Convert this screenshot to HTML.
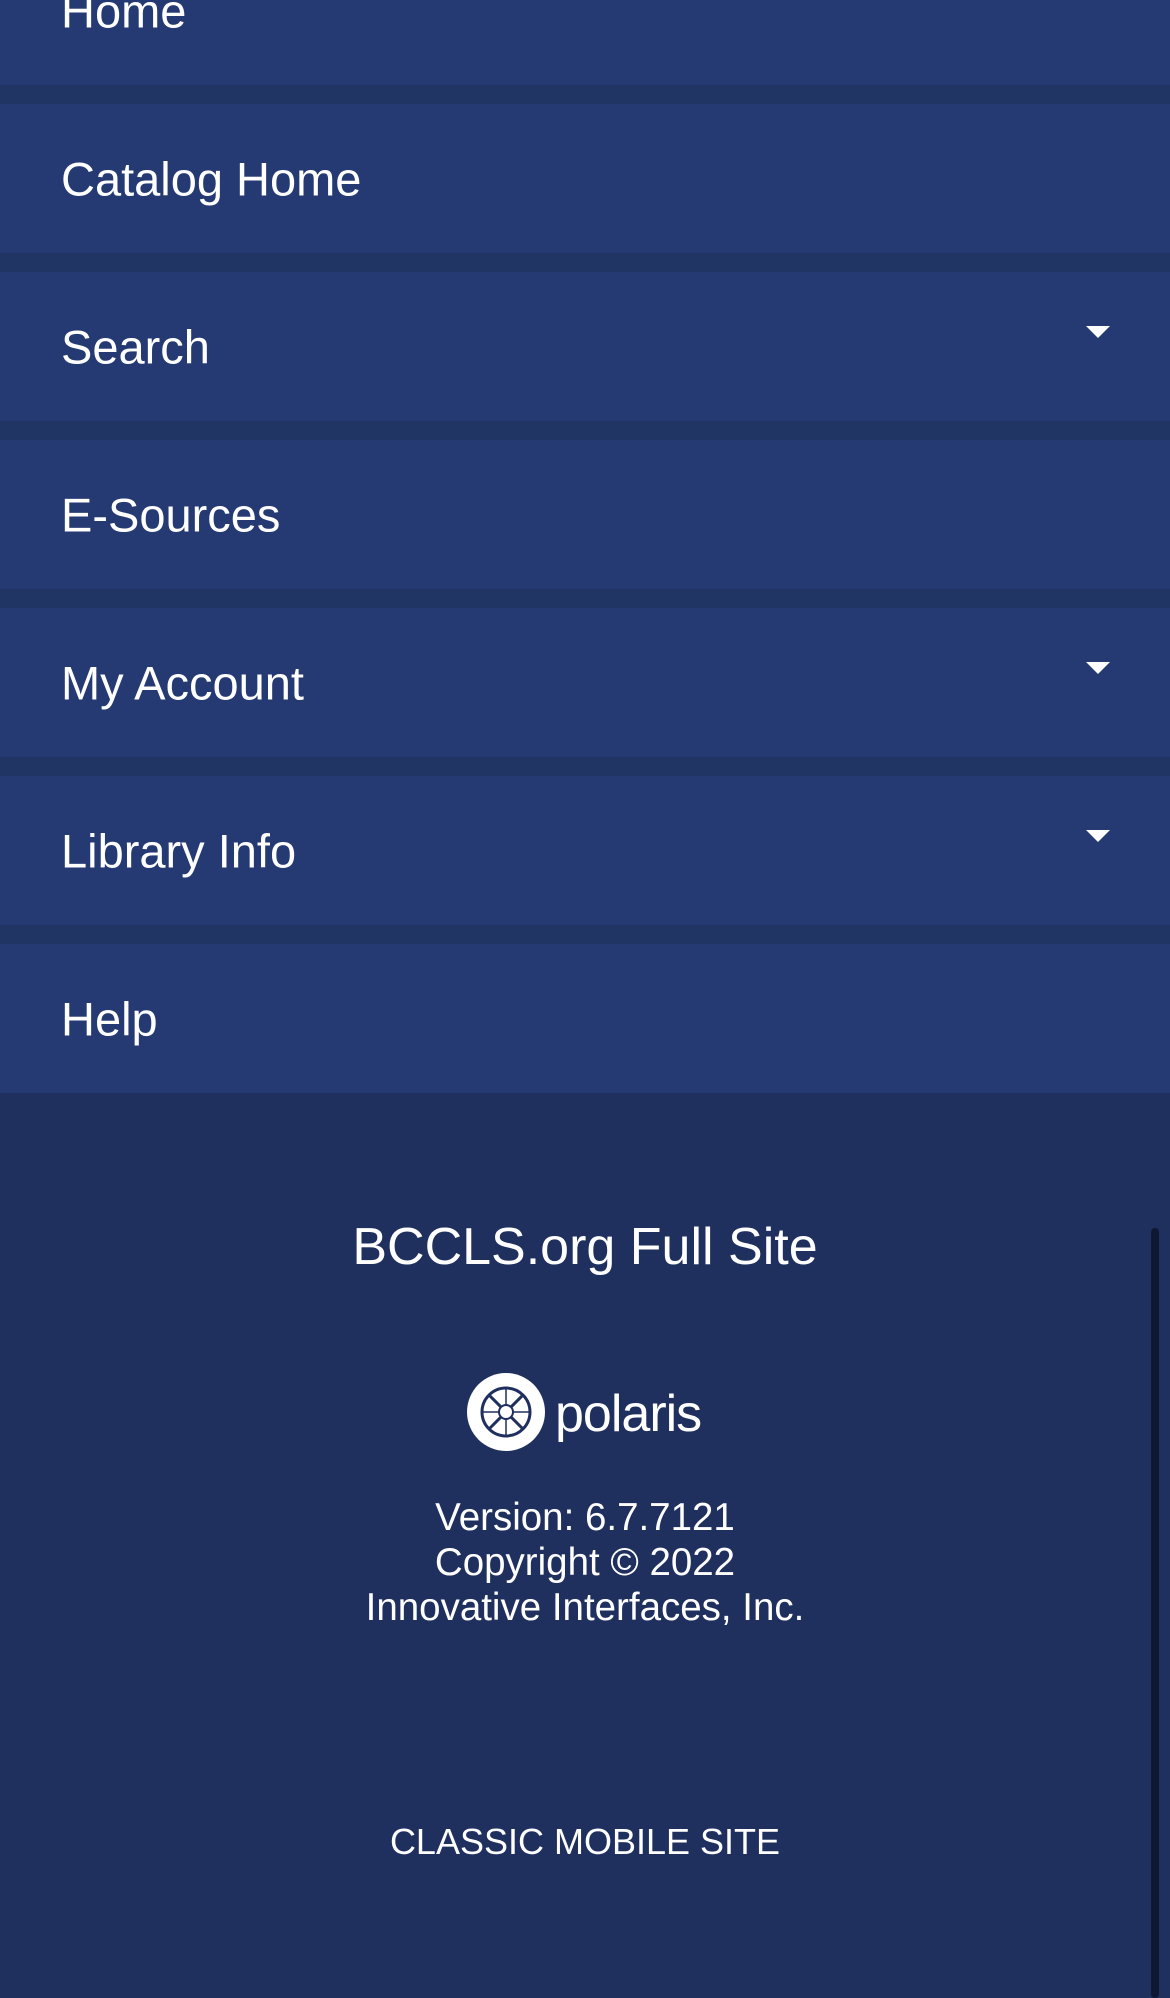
<!DOCTYPE html>
<html><head><meta charset="utf-8"><style>
html,body{margin:0;padding:0;}
body{width:1170px;height:1985px;background:#1f2f5e;position:relative;overflow:hidden;font-family:"Liberation Sans",sans-serif;color:#fff;}
.gap{position:absolute;left:0;width:1170px;background:#213564;}
.item{position:absolute;left:0;width:1170px;height:149px;background:#253a73;}
.item span{position:absolute;left:61px;top:50%;transform:translateY(-50%);font-size:47px;line-height:1;}
.tri{position:absolute;left:1086px;width:0;height:0;border-left:12px solid transparent;border-right:12px solid transparent;border-top:12px solid #fff;}
.c{position:absolute;left:0;width:1170px;text-align:center;}
</style></head><body>
<div class="gap" style="top:0;height:1093px"></div>
<div class="item" style="top:-64px"><span>Home</span></div>
<div class="item" style="top:104px"><span>Catalog Home</span></div>
<div class="item" style="top:272px"><span>Search</span></div>
<div class="tri" style="top:326px"></div>
<div class="item" style="top:440px"><span>E-Sources</span></div>
<div class="item" style="top:608px"><span>My Account</span></div>
<div class="tri" style="top:662px"></div>
<div class="item" style="top:776px"><span>Library Info</span></div>
<div class="tri" style="top:830px"></div>
<div class="item" style="top:944px"><span>Help</span></div>

<div class="c" style="top:1217px;font-size:52px;line-height:60px">BCCLS.org Full Site</div>

<div style="position:absolute;left:467px;top:1371px;width:240px;height:82px">
<svg width="240" height="82" viewBox="0 0 240 82">
<circle cx="39" cy="41" r="39" fill="#fff"/>
<circle cx="39" cy="41" r="24" fill="none" stroke="#1f2f5e" stroke-width="3"/>
<g stroke="#1f2f5e" stroke-width="3"><line x1="22" y1="24" x2="56" y2="58"/><line x1="56" y1="24" x2="22" y2="58"/><line x1="39" y1="17" x2="39" y2="65" stroke-width="1.5"/><line x1="15" y1="41" x2="63" y2="41" stroke-width="1.5"/></g>
<circle cx="39" cy="41" r="7" fill="#fff" stroke="#1f2f5e" stroke-width="2"/>
<text x="88" y="60" font-family="Liberation Sans,sans-serif" font-size="52" fill="#fff" letter-spacing="-1">polaris</text>
</svg></div>

<div class="c" style="top:1495px;font-size:38.5px;line-height:45px">Version: 6.7.7121<br>Copyright © 2022<br>Innovative Interfaces, Inc.</div>

<div class="c" style="top:1822px;font-size:36px;line-height:40px">CLASSIC MOBILE SITE</div>

<div style="position:absolute;left:1151px;top:1228px;width:8px;height:770px;background:#0f1832;border-radius:4px"></div>
</body></html>
